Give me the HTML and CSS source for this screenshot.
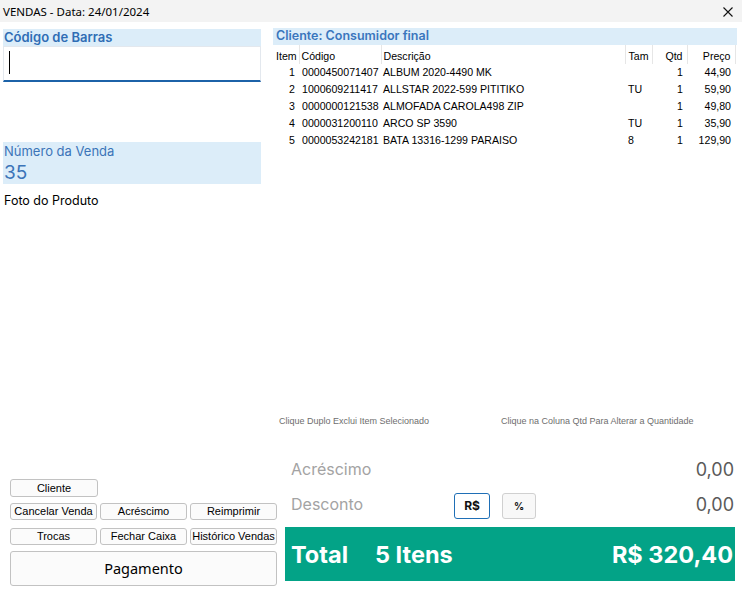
FILE: index.html
```html
<!DOCTYPE html>
<html lang="pt-BR">
<head>
<meta charset="utf-8">
<title>Vendas</title>
<link rel="stylesheet" href="styles.css">
</head>
<body>
<div class="window">
  <div class="titlebar">
    <span class="title">VENDAS - Data: 24/01/2024</span>
    <svg class="close" width="10" height="10" viewBox="0 0 10 10"><path d="M0.5 0.5 L9.5 9.5 M9.5 0.5 L0.5 9.5" stroke="#111" stroke-width="1.1" fill="none"/></svg>
  </div>
  <div class="main">
    <div class="left-top">
      <div class="field-head">Código de Barras</div>
      <div class="barcode-input"><span class="caret"></span></div>
      <div class="sale-number">
        <div class="sale-label">Número da Venda</div>
        <div class="sale-value">35</div>
      </div>
      <div class="photo-label">Foto do Produto</div>
    </div>
    <div class="right-top">
      <div class="client-head">Cliente: Consumidor final</div>
      <div class="grid-wrap">
        <table class="items">
          <colgroup>
            <col class="c-item"><col class="c-code"><col class="c-desc"><col class="c-tam"><col class="c-qtd"><col class="c-price">
          </colgroup>
          <thead>
            <tr><th class="l">Item</th><th class="l">Código</th><th class="l">Descrição</th><th class="l tam">Tam</th><th class="r">Qtd</th><th class="r">Preço</th></tr>
          </thead>
          <tbody>
            <tr><td class="r n">1</td><td class="code">0000450071407</td><td>ALBUM 2020-4490 MK</td><td class="tam"></td><td class="r">1</td><td class="r">44,90</td></tr>
            <tr><td class="r n">2</td><td class="code">1000609211417</td><td>ALLSTAR 2022-599 PITITIKO</td><td class="tam">TU</td><td class="r">1</td><td class="r">59,90</td></tr>
            <tr><td class="r n">3</td><td class="code">0000000121538</td><td>ALMOFADA CAROLA498 ZIP</td><td class="tam"></td><td class="r">1</td><td class="r">49,80</td></tr>
            <tr><td class="r n">4</td><td class="code">0000031200110</td><td>ARCO SP 3590</td><td class="tam">TU</td><td class="r">1</td><td class="r">35,90</td></tr>
            <tr><td class="r n">5</td><td class="code">0000053242181</td><td>BATA 13316-1299 PARAISO</td><td class="tam">8</td><td class="r">1</td><td class="r">129,90</td></tr>
          </tbody>
        </table>
      </div>
      <div class="hints">
        <span class="hint hint-1">Clique Duplo Exclui Item Selecionado</span>
        <span class="hint">Clique na Coluna Qtd Para Alterar a Quantidade</span>
      </div>
    </div>
    <div class="left-bottom">
      <div class="btn-row first">
        <button class="btn">Cliente</button>
      </div>
      <div class="btn-row">
        <button class="btn">Cancelar Venda</button>
        <button class="btn">Acréscimo</button>
        <button class="btn">Reimprimir</button>
      </div>
      <div class="btn-row third">
        <button class="btn">Trocas</button>
        <button class="btn">Fechar Caixa</button>
        <button class="btn">Histórico Vendas</button>
      </div>
      <button class="btn pay">Pagamento</button>
    </div>
    <div class="right-bottom">
      <div class="adj-row">
        <span class="adj-label">Acréscimo</span>
        <span class="adj-value">0,00</span>
      </div>
      <div class="adj-row desc">
        <span class="adj-label">Desconto</span>
        <button class="mode mode-active">R$</button>
        <button class="mode mode-pct">%</button>
        <span class="adj-value">0,00</span>
      </div>
      <div class="total-bar">
        <span class="total-word">Total</span>
        <span class="total-items">5 Itens</span>
        <span class="total-value">R$ 320,40</span>
      </div>
    </div>
  </div>
</div>
</body>
</html>
```
FILE: styles.css
```css
* { box-sizing: border-box; }
html, body { margin: 0; padding: 0; }
body {
  width: 742px;
  height: 594px;
  overflow: hidden;
  background: #ffffff;
  font-family: "Inter", "Noto Sans", sans-serif;
  color: #000;
}
.window { width: 742px; height: 594px; display: flex; flex-direction: column; }

.titlebar {
  height: 22px;
  background: #f3f3f3;
  display: flex;
  align-items: center;
  justify-content: space-between;
  padding: 0 9px 0 3px;
}
.title {
  font-family: "Noto Sans", sans-serif;
  font-size: 11.5px;
  color: #000;
}
.close { display: block; margin-top: 1px; }

.main {
  flex: 1;
  display: grid;
  grid-template-columns: 273px 1fr;
  grid-template-rows: 1fr auto;
}

/* left top */
.left-top { padding: 7px 0 0 3px; width: 261px; }
.field-head {
  height: 17px;
  background: #dcedf9;
  color: #2f6db5;
  font-weight: 600;
  font-size: 13px;
  line-height: 17px;
  padding-left: 1px;
}
.barcode-input {
  height: 36px;
  background: #fff;
  border: 1px solid #e3e8ee;
  border-bottom: 2px solid #1c62a8;
  padding: 4px 0 0 5px;
}
.caret { display: block; width: 1px; height: 23px; background: #000; }
.sale-number {
  margin-top: 60px;
  height: 42px;
  background: #dcedf9;
  padding: 1px 0 0 1px;
}
.sale-label { font-size: 13px; line-height: 16px; color: #3b74b8; }
.sale-value { font-size: 19px; line-height: 26px; color: #3b74b8; padding-top: 1px; }
.photo-label { margin-top: 10px; font-size: 12.5px; line-height: 14px; color: #000; padding-left: 1px; }

/* right top */
.right-top {
  padding: 6px 5px 0 0;
  display: flex;
  flex-direction: column;
}
.client-head {
  height: 17px;
  background: #dcedf9;
  color: #3a76bd;
  font-weight: 600;
  font-size: 12.5px;
  line-height: 16px;
  padding-left: 3px;
}
.grid-wrap { flex: 1; }
.items {
  width: 462px;
  border-collapse: collapse;
  table-layout: fixed;
  font-family: "Liberation Sans", Arial, sans-serif;
  font-size: 10.6px;
  color: #000;
}
.c-item { width: 26px; }
.c-code { width: 82px; }
.c-desc { width: 244px; }
.c-tam { width: 27px; }
.c-qtd { width: 35px; }
.c-price { width: 48px; }
.items th {
  height: 19px;
  padding: 2px 3px 0 2px;
  font-weight: normal;
  border-right: 1px solid #e6e6e6;
  white-space: nowrap;
  overflow: hidden;
}
.items th:first-child { padding-left: 3px; }
.items th.r { padding-right: 4px; }
.items td {
  height: 16.8px;
  padding: 0 2px;
  white-space: nowrap;
  overflow: hidden;
}
.items td.n { padding-right: 2px; }
.items td.code { padding-left: 3px; }
.items td.r { padding-right: 4px; }
.items .l { text-align: left; }
.items .r { text-align: right; }
.items .tam { padding-left: 3px; }

.hints {
  height: 12px;
  margin: 0 0 28px 6px;
  display: flex;
  font-family: "Liberation Sans", Arial, sans-serif;
  font-size: 9px;
  line-height: 12px;
  color: #6e6e6e;
}
.hint-1 { width: 222px; }

/* left bottom */
.left-bottom {
  align-self: end;
  padding: 0 0 8px 10px;
  display: flex;
  flex-direction: column;
  align-items: flex-start;
}
.btn-row { display: flex; gap: 3px; margin-top: 6px; }
.btn-row.first { margin-top: 0; }
.btn-row.third { margin-top: 8px; }
.btn {
  flex: none;
  font-family: "Liberation Sans", Arial, sans-serif;
  font-size: 11px;
  color: #000;
  background: #fbfbfb;
  border: 1px solid #c2c2c2;
  border-radius: 3px;
  height: 17px;
  width: 87px;
  padding: 0;
  line-height: 15px;
  white-space: nowrap;
}
.btn-row.first .btn { width: 88px; height: 18px; }
.btn.pay {
  margin-top: 6px;
  width: 267px;
  height: 35px;
  font-family: "Noto Sans", sans-serif;
  font-size: 14.5px;
}

/* right bottom */
.right-bottom {
  padding: 0 7px 13px 12px;
  display: flex;
  flex-direction: column;
}
.adj-row {
  height: 28px;
  display: flex;
  align-items: center;
  padding-left: 6px;
}
.adj-row.desc { margin-top: 7px; }
.adj-label { font-size: 16px; color: #a3a3a3; width: 163px; }
.adj-value { margin-left: auto; font-size: 18px; color: #5a5a5a; padding-right: 1px; }
.mode {
  width: 36px;
  height: 26px;
  margin-top: 3px;
  border-radius: 3px;
  font-family: "Inter", sans-serif;
  font-weight: 700;
  padding: 0;
  color: #111;
}
.mode-active { background: #fff; border: 1px solid #1f6fb6; font-size: 12px; }
.mode-pct { margin-left: 12px; width: 34px; background: #f8f8f8; border: 1px solid #d0d0d0; font-size: 10px; }
.total-bar {
  margin-top: 9px;
  height: 54px;
  background: #03a387;
  display: flex;
  align-items: center;
  padding: 0 2px 0 6px;
  color: #fff;
  font-weight: 700;
  font-size: 23.5px;
}
.total-word { width: 84px; }
.total-value { margin-left: auto; }
```
